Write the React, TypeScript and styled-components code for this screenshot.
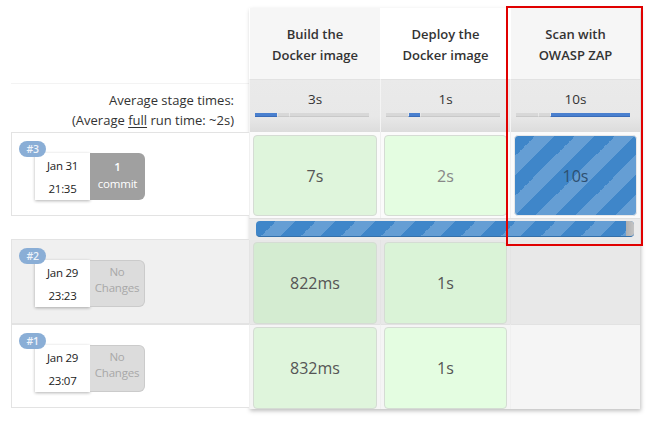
import React from "react";
import styled, { createGlobalStyle, css } from "styled-components";

const GlobalStyle = createGlobalStyle`
	html, body {
		margin: 0;
		padding: 0;
		background: #fff;
	}
	body {
		font-family: "Open Sans", Lato, sans-serif;
		color: #333;
	}
`;

type Run = {
	id: number;
	date: string;
	time: string;
	commits?: number;
	shade: "white" | "grey";
	height: number;
	gap?: number;
};

const runs: Run[] = [
	{ id: 3, date: "Jan 31", time: "21:35", commits: 1, shade: "white", height: 84 },
	{ id: 2, date: "Jan 29", time: "23:23", shade: "grey", height: 85, gap: 23 },
	{ id: 1, date: "Jan 29", time: "23:07", shade: "white", height: 84 },
];

const stages = [
	{ name: ["Build the", "Docker image"], avg: "3s", hi: 0 },
	{ name: ["Deploy the", "Docker image"], avg: "1s", hi: 1 },
	{ name: ["Scan with", "OWASP ZAP"], avg: "10s", hi: 2 },
];

const App = () => {
	return (
		<>
			<GlobalStyle />
			<Page>
				<Side>
					<AvgLabel>
						Average stage times:
						<br />
						(Average <u>full</u> run time: ~2s)
					</AvgLabel>
					{runs.map((r) => (
						<RunRow key={r.id} $shade={r.shade} $h={r.height} $gap={r.gap}>
							<Badge>#{r.id}</Badge>
							<DateBox>
								<span>{r.date}</span>
								<span>{r.time}</span>
							</DateBox>
							{r.commits ? (
								<Changes $has>
									<b>{r.commits}</b>
									commit
								</Changes>
							) : (
								<Changes>
									No
									<br />
									Changes
								</Changes>
							)}
						</RunRow>
					))}
				</Side>

				<Table>
					{stages.map((s, i) => (
						<Head key={s.name[0]} $alt={i !== 1}>
							{s.name[0]}
							<br />
							{s.name[1]}
						</Head>
					))}
					{stages.map((s) => (
						<AvgCell key={s.avg}>
							<AvgText>{s.avg}</AvgText>
							<Bar>
								{[22, 12, 80].map((w, k) => (
									<Seg key={k} $on={k === s.hi} style={{ width: w }} />
								))}
							</Bar>
						</AvgCell>
					))}

					<BodyCell $row="a">
						<StageBox $tone="dark">7s</StageBox>
					</BodyCell>
					<BodyCell $row="a">
						<StageBox $tone="light" $faded>
							2s
						</StageBox>
					</BodyCell>
					<BodyCell $row="a">
						<StageBox $tone="running">10s</StageBox>
					</BodyCell>

					<ProgressRow>
						<Progress>
							<ProgressRest />
						</Progress>
					</ProgressRow>

					<BodyCell $row="b">
						<StageBox $tone="darkB">822ms</StageBox>
					</BodyCell>
					<BodyCell $row="b">
						<StageBox $tone="lightB">1s</StageBox>
					</BodyCell>
					<BodyCell $row="b" />

					<BodyCell $row="c">
						<StageBox $tone="dark">832ms</StageBox>
					</BodyCell>
					<BodyCell $row="c">
						<StageBox $tone="light">1s</StageBox>
					</BodyCell>
					<BodyCell $row="c" />
				</Table>

				<Highlight />
			</Page>
		</>
	);
};

export default App;

const Page = styled.div`
	position: relative;
	display: flex;
	align-items: flex-start;
	width: 652px;
	height: 421px;
	box-sizing: border-box;
	padding: 8px 0 0 11px;
`;

const Side = styled.div`
	width: 238px;
	display: flex;
	flex-direction: column;
	padding-top: 75px;
`;

const AvgLabel = styled.div`
	height: 49px;
	box-sizing: border-box;
	padding: 6px 15px 0 0;
	text-align: right;
	font-size: 13px;
	line-height: 20px;
	color: #333;
	border-top: 1px solid #f3f3f3;

	u {
		text-underline-offset: 2px;
	}
`;

const RunRow = styled.div<{ $shade: string; $h: number; $gap?: number }>`
	position: relative;
	display: flex;
	height: ${(p) => p.$h}px;
	margin-top: ${(p) => p.$gap ?? 0}px;
	box-sizing: border-box;
	padding: 20px 0 0 23px;
	background: ${(p) => (p.$shade === "grey" ? "#f0f0f0" : "#fff")};
	border: 1px solid #e3e3e3;
	border-right: none;
`;

const Badge = styled.div`
	position: absolute;
	left: 7px;
	top: 8px;
	z-index: 2;
	width: 27px;
	height: 16px;
	border-radius: 8px;
	background: #8aaed6;
	color: #eef3fa;
	font-size: 10.5px;
	font-weight: 600;
	line-height: 16px;
	text-align: center;
	letter-spacing: -0.3px;
`;

const DateBox = styled.div`
	width: 55px;
	height: 47px;
	background: #fff;
	box-shadow: 0 1px 3px rgba(0, 0, 0, 0.3);
	display: flex;
	flex-direction: column;
	align-items: center;
	justify-content: center;
	font-size: 11.5px;
	line-height: 23px;
	color: #222;
	letter-spacing: -0.3px;
`;

const Changes = styled.div<{ $has?: boolean }>`
	width: 55px;
	height: 47px;
	box-sizing: border-box;
	border-radius: 0 6px 6px 0;
	padding-top: 4px;
	display: flex;
	flex-direction: column;
	align-items: center;
	text-align: center;
	font-size: 11.5px;
	line-height: 16px;
	letter-spacing: -0.2px;
	${(p) =>
		p.$has
			? css`
					background: #a0a0a0;
					color: #fff;
					padding-top: 5px;
					line-height: 17px;
			  `
			: css`
					background: #dcdcdc;
					border: 1px solid #cbcbcb;
					border-left: none;
					color: #a8a8a8;
					padding-top: 3px;
			  `}

	b {
		font-weight: 600;
	}
`;

const Table = styled.div`
	display: grid;
	grid-template-columns: 131px 130px 130px;
	grid-template-rows: 72px 52px 86px 22px 84px 85px;
	width: 391px;
	background: #fff;
	box-shadow: 1px 2px 4px rgba(0, 0, 0, 0.25);
`;

const Head = styled.div<{ $alt: boolean }>`
	background: ${(p) => (p.$alt ? "#f6f6f6" : "#fff")};
	border-left: 1px solid #fff;
	border-bottom: 1px solid #e2e2e2;
	box-sizing: border-box;
	padding-top: 3px;
	display: flex;
	align-items: center;
	justify-content: center;
	text-align: center;
	font-size: 13px;
	font-weight: 600;
	line-height: 21px;
	color: #333;
`;

const AvgCell = styled.div`
	background: linear-gradient(#eaeaea 0%, #e8e8e8 70%, #dcdcdc 100%);
	border-left: 1px solid #f4f4f4;
	box-sizing: border-box;
	padding: 9px 0 0 5px;
`;

const AvgText = styled.div`
	text-align: center;
	font-size: 13.5px;
	line-height: 20px;
	color: #333;
	margin-right: 5px;
`;

const Bar = styled.div`
	display: flex;
	width: 114px;
	height: 4px;
	margin-top: 4px;
`;

const Seg = styled.div<{ $on: boolean }>`
	height: 4px;
	background: ${(p) => (p.$on ? "#4a80cf" : "#d8d8d8")};
	border-bottom: 1px solid ${(p) => (p.$on ? "#3a6cb8" : "#c9c9c9")};
	box-sizing: border-box;
	& + & {
		border-left: 1px solid #e8e8e8;
	}
`;

const rowBg: Record<string, string> = { a: "#fbfbfb", b: "#e8e8e8", c: "#f5f5f5" };

const BodyCell = styled.div<{ $row: string }>`
	background: ${(p) => rowBg[p.$row]};
	border-left: 1px solid ${(p) => (p.$row === "b" ? "#e4e4e4" : "#f0f0f0")};
	border-top: ${(p) => (p.$row === "c" ? "1px solid #e2e2e2" : "none")};
	box-sizing: border-box;
	padding: ${(p) => (p.$row === "a" ? "3px 3px 2px 3px" : "2px 3px 0 3px")};
	display: flex;
`;

const stripes = css`
	background-color: #3f86c9;
	background-image: linear-gradient(
		-45deg,
		rgba(255, 255, 255, 0.2) 25%,
		transparent 25%,
		transparent 50%,
		rgba(255, 255, 255, 0.2) 50%,
		rgba(255, 255, 255, 0.2) 75%,
		transparent 75%,
		transparent
	);
	background-size: 40px 40px;
`;

const tones: Record<string, ReturnType<typeof css>> = {
	dark: css`
		background: #dff5dc;
	`,
	light: css`
		background: #e4fde1;
	`,
	darkB: css`
		background: #d4ecd1;
	`,
	lightB: css`
		background: #daf3d7;
	`,
	running: css`
		${stripes}
	`,
};

const StageBox = styled.div<{ $tone: string; $faded?: boolean }>`
	flex: 1;
	border: 1px solid #d5dcd4;
	border-radius: 4px;
	display: flex;
	align-items: center;
	justify-content: center;
	font-size: 16px;
	color: ${(p) => (p.$faded ? "#888" : "#555")};
	${(p) => tones[p.$tone]}
	${(p) =>
		p.$tone === "running" &&
		css`
			color: #2d4f70;
			border-color: #e8e8e8;
		`}
`;

const ProgressRow = styled.div`
	grid-column: 1 / span 3;
	background: #ebebeb;
	border-top: 1px solid #e0e0e0;
	box-sizing: border-box;
	padding: 2px 6px 0 7px;
`;

const Progress = styled.div`
	position: relative;
	height: 16px;
	border-radius: 4px;
	overflow: hidden;
	${stripes}
	border-bottom: 1px solid #3470aa;
	box-sizing: border-box;
`;

const ProgressRest = styled.div`
	position: absolute;
	right: 0;
	top: 0;
	bottom: 0;
	width: 8px;
	background: linear-gradient(90deg, #b0b0b0, #c4c4c4);
`;

const Highlight = styled.div`
	position: absolute;
	left: 506px;
	top: 6px;
	width: 137px;
	height: 240px;
	box-sizing: border-box;
	border: 2px solid #e00000;
	pointer-events: none;
`;
